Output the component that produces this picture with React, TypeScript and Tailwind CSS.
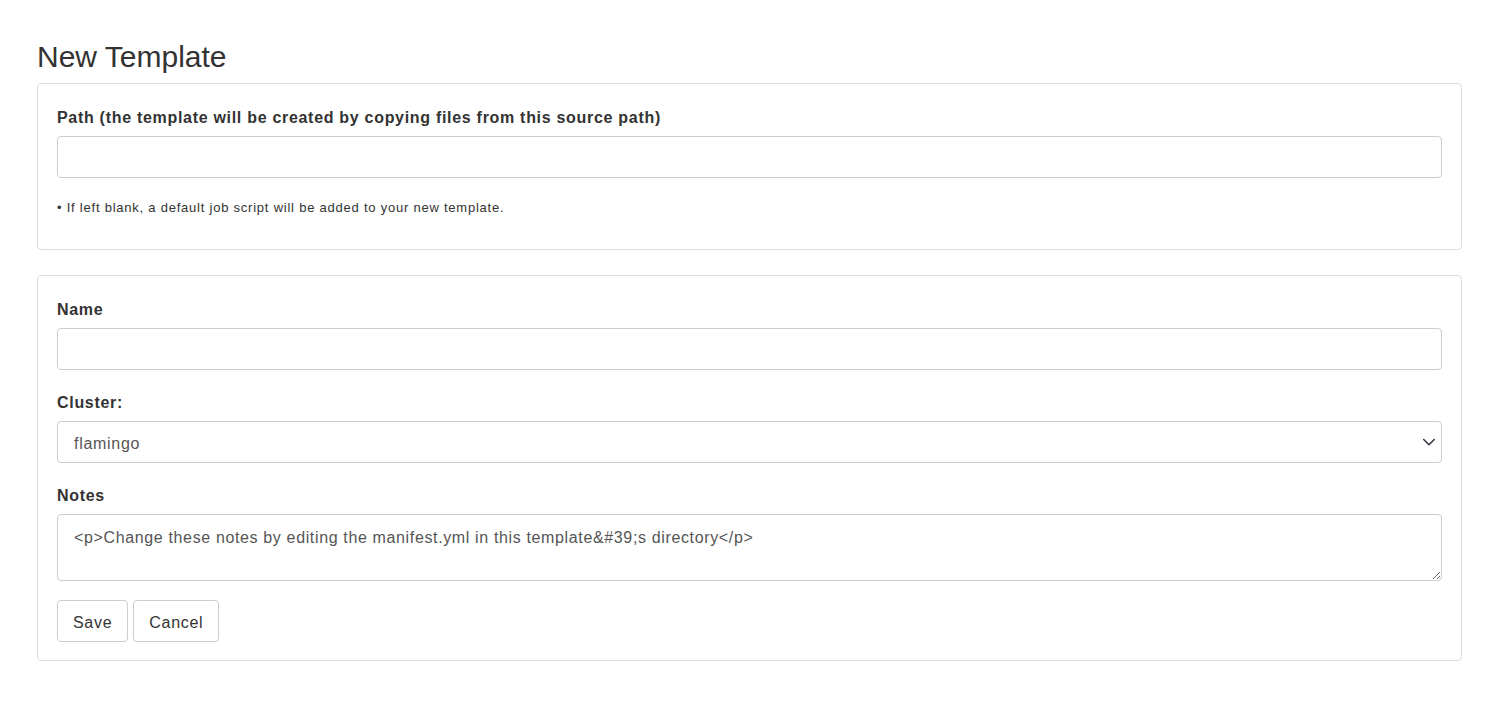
import React from "react";

const labelClass = "block text-[16px] font-bold leading-6 tracking-[0.7px] text-[#333] mb-[6px]";
const inputClass =
  "block w-full h-[42px] rounded-[4px] border border-[#ccc] bg-white px-4 text-[16px] tracking-[0.7px] text-[#555] outline-none";
const buttonClass =
  "h-[42px] rounded-[4px] border border-[#ccc] bg-white px-[15px] pt-[3px] text-[16px] tracking-[0.7px] text-[#333]";

function Card({ children, className = "" }: { children: React.ReactNode; className?: string }) {
  return (
    <div className={["rounded-[4px] border border-[#dedede] bg-white px-[19px] pt-[22px]", className].join(" ")}>
      {children}
    </div>
  );
}

export default function App() {
  return (
    <div className="min-h-[701px] bg-white pl-[37px] pr-[44px] font-['Liberation_Sans',Arial,sans-serif] text-[#333]">
      <h1 className="pt-[39px] mb-[8px] text-[30px] leading-9 font-normal text-[#333]">New Template</h1>

      <Card className="pb-5">
        <label className={labelClass}>
          Path (the template will be created by copying files from this source path)
        </label>
        <input type="text" className={inputClass} />
        <p className="mt-[20px] mb-[11px] text-[13px] leading-5 tracking-[0.77px] text-[#333]">
          • If left blank, a default job script will be added to your new template.
        </p>
      </Card>

      <Card className="mt-[25px] pb-[18px]">
        <div className="mb-[21px]">
          <label className={labelClass}>Name</label>
          <input type="text" className={inputClass} />
        </div>

        <div className="mb-[21px]">
          <label className={labelClass}>Cluster:</label>
          <div className="relative">
            <div className={[inputClass, "flex items-center pt-[3px]"].join(" ")}>flamingo</div>
            <svg
              className="pointer-events-none absolute right-[5px] top-1/2 -translate-y-1/2"
              width="16"
              height="16"
              viewBox="0 0 16 16"
              fill="none"
            >
              <path
                d="M2.75 5.5l5.25 5.25 5.25-5.25"
                stroke="#343a40"
                strokeWidth="1.6"
                strokeLinecap="round"
                strokeLinejoin="round"
              />
            </svg>
          </div>
        </div>

        <div className="mb-[19px]">
          <label className={labelClass}>Notes</label>
          <textarea
            readOnly
            defaultValue={"<p>Change these notes by editing the manifest.yml in this template&#39;s directory</p>"}
            className="block w-full h-[67px] resize-y rounded-[4px] border border-[#ccc] bg-white px-4 pt-[11px] pb-[5px] text-[16px] leading-6 tracking-[0.64px] text-[#555] outline-none"
          />
        </div>

        <div className="flex gap-[5px]">
          <button type="button" className={buttonClass}>
            Save
          </button>
          <button type="button" className={buttonClass}>
            Cancel
          </button>
        </div>
      </Card>
    </div>
  );
}
